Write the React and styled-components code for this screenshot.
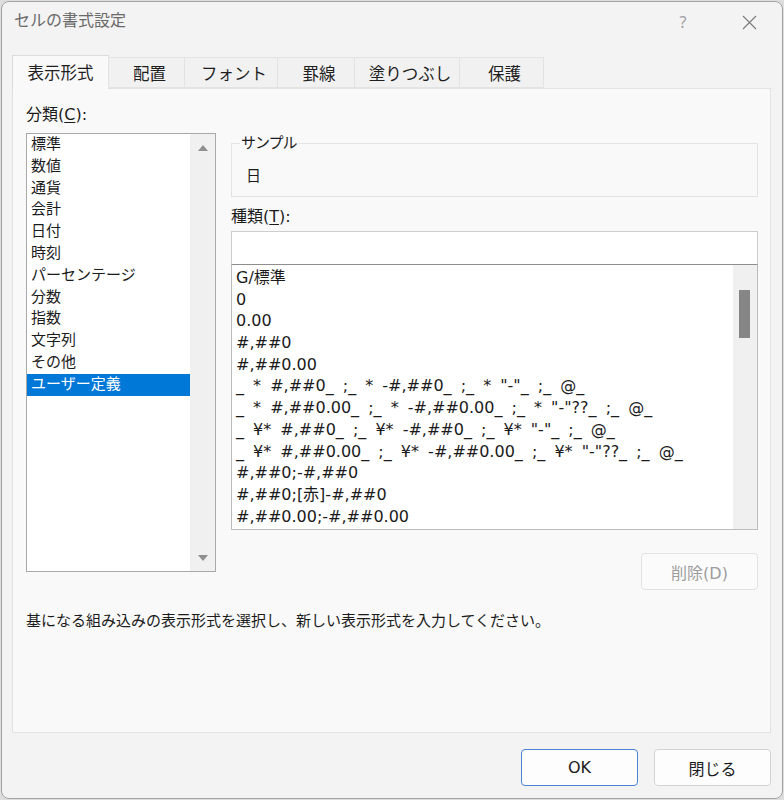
import React from 'react';
import styled, { createGlobalStyle } from 'styled-components';

const Global = createGlobalStyle`
  html, body { margin: 0; padding: 0; background: #dedede; }
  body {
    font-family: "DejaVu Sans", "Noto Sans CJK JP", sans-serif;
    font-size: 15px;
    color: #1b1b1b;
  }
  #root { width: 784px; height: 800px; }
`;

const Window = styled.div`
  margin: 1px 1px 0 1px;
  width: 782px;
  height: 798px;
  box-sizing: border-box;
  border: 1px solid #a3a3a3;
  border-radius: 8px;
  background: #f3f3f3;
  display: flex;
  flex-direction: column;
  overflow: hidden;
`;

const TitleBar = styled.div`
  height: 53px;
  box-sizing: border-box;
  padding: 9px 17px 0 12px;
  display: flex;
  align-items: flex-start;
  flex-shrink: 0;
`;

const Title = styled.div`
  line-height: 20px;
  font-size: 16px;
  color: #6a6a6a;
  flex: 1;
`;

const TitleButtons = styled.div`
  display: flex;
  gap: 34px;
`;

const TitleButton = styled.div`
  width: 32px;
  height: 22px;
  display: flex;
  align-items: center;
  justify-content: center;
  color: #a0a0a0;
  font-family: "Noto Sans", sans-serif;
  font-size: 16px;
  line-height: 20px;
`;

const Body = styled.div`
  padding: 0 11px 0 10px;
  display: flex;
  flex-direction: column;
`;

const TabStrip = styled.div`
  display: flex;
  align-items: flex-end;
  height: 33px;
  position: relative;
  z-index: 1;
`;

const Tab = styled.div`
  width: ${p => p.$w}px;
  height: ${p => (p.$active ? 34 : 31)}px;
  box-sizing: border-box;
  margin-left: ${p => (p.$first ? 0 : -1)}px;
  margin-bottom: ${p => (p.$active ? -1 : 0)}px;
  border: 1px solid ${p => (p.$active ? '#dcdcdc' : '#e3e3e3')};
  border-bottom: ${p => (p.$active ? 'none' : '1px solid #e3e3e3')};
  background: ${p => (p.$active ? '#f9f9f9' : '#f1f1f1')};
  display: flex;
  align-items: center;
  justify-content: center;
  padding-left: ${p => (p.$active ? 0 : 6)}px;
  padding-bottom: ${p => (p.$active ? 1 : 0)}px;
  font-size: 16.5px;
  color: #1f1f1f;
`;

const Panel = styled.div`
  height: 645px;
  box-sizing: border-box;
  border: 1px solid #e2e2e2;
  background: #f9f9f9;
  padding: 16px 12px 0 13px;
  display: flex;
  flex-direction: column;
`;

const Columns = styled.div`
  display: flex;
  align-items: flex-start;
  gap: 15px;
`;

const LeftColumn = styled.div`
  width: 190px;
  display: flex;
  flex-direction: column;
  gap: 8px;
`;

const RightColumn = styled.div`
  width: 527px;
  padding-top: 28px;
  display: flex;
  flex-direction: column;
`;

const Label = styled.div`
  line-height: 20px;
  font-size: 16px;
  color: #1b1b1b;
  margin-top: ${p => p.$mt || 0}px;
  u { text-underline-offset: 2px; }
`;

const ListBox = styled.div`
  height: ${p => p.$h}px;
  box-sizing: border-box;
  border: 1px solid ${p => p.$border};
  border-top: ${p => (p.$noTop ? 'none' : `1px solid ${p.$border}`)};
  background: #ffffff;
  display: flex;
  overflow: hidden;
`;

const Items = styled.div`
  flex: 1;
  padding-top: ${p => p.$pt || 0}px;
  min-width: 0;
  overflow: hidden;
`;

const Item = styled.div`
  height: ${p => p.$lh}px;
  line-height: ${p => p.$lh}px;
  padding-left: 4px;
  white-space: pre;
  font-size: ${p => p.$fs || 15}px;
  word-spacing: ${p => p.$ws || 0}px;
  background: ${p => (p.$selected ? '#0078d7' : 'transparent')};
  color: ${p => (p.$selected ? '#ffffff' : '#1b1b1b')};
`;

const ArrowTrack = styled.div`
  width: 25px;
  background: #f0f0f0;
  display: flex;
  flex-direction: column;
  align-items: center;
  justify-content: space-between;
  padding: 11px 0 10px;
  box-sizing: border-box;
`;

const Arrow = styled.div`
  width: 0;
  height: 0;
  border-left: 5.5px solid transparent;
  border-right: 5.5px solid transparent;
  ${p =>
    p.$up
      ? 'border-bottom: 6px solid #8f8f8f;'
      : 'border-top: 6px solid #8f8f8f;'}
`;

const ThumbTrack = styled.div`
  width: 24px;
  background: #f0f0f0;
  padding: 25px 0 0 6px;
  box-sizing: border-box;
`;

const Thumb = styled.div`
  width: 11px;
  height: 48px;
  background: #868686;
`;

const GroupBox = styled.fieldset`
  margin: 0;
  padding: 0 0 0 8px;
  border: 1px solid #e3e3e3;
  min-width: 0;
`;

const Legend = styled.legend`
  padding: 0 1px;
  line-height: 20px;
  font-size: 15px;
  letter-spacing: -1px;
  color: #1b1b1b;
`;

const SampleValue = styled.div`
  margin: 13px 0 10px 6px;
  line-height: 20px;
  font-size: 15px;
  color: #1b1b1b;
`;

const TextInput = styled.div`
  margin-top: 4px;
  height: 34px;
  box-sizing: border-box;
  background: #ffffff;
  border: 1px solid #cdcdcd;
  border-bottom: 1px solid #8e8e8e;
`;

const Button = styled.div`
  width: 117px;
  height: 37px;
  box-sizing: border-box;
  border-radius: 4px;
  border: 1px solid ${p => p.$border || '#d3d3d3'};
  background: ${p => (p.$disabled ? '#fbfbfb' : '#fdfdfd')};
  color: ${p => (p.$disabled ? '#9d9d9d' : '#1b1b1b')};
  display: flex;
  align-items: center;
  justify-content: center;
  font-size: 16px;
  align-self: ${p => (p.$end ? 'flex-end' : 'auto')};
  margin-top: ${p => p.$mt || 0}px;
`;

const Description = styled.div`
  margin-top: 21px;
  line-height: 20px;
  font-size: 15px;
  color: #1b1b1b;
`;

const Footer = styled.div`
  display: flex;
  justify-content: flex-end;
  gap: 16px;
  padding-top: 16px;
`;

const tabs = [
  { label: '表示形式', w: 97, active: true },
  { label: '配置', w: 77 },
  { label: 'フォント', w: 94 },
  { label: '罫線', w: 78 },
  { label: '塗りつぶし', w: 106 },
  { label: '保護', w: 85 },
];

const categories = [
  '標準', '数値', '通貨', '会計', '日付', '時刻', 'パーセンテージ',
  '分数', '指数', '文字列', 'その他', 'ユーザー定義',
];

const formats = [
  'G/標準',
  '0',
  '0.00',
  '#,##0',
  '#,##0.00',
  '_ * #,##0_ ;_ * -#,##0_ ;_ * "-"_ ;_ @_ ',
  '_ * #,##0.00_ ;_ * -#,##0.00_ ;_ * "-"??_ ;_ @_ ',
  '_ ¥* #,##0_ ;_ ¥* -#,##0_ ;_ ¥* "-"_ ;_ @_ ',
  '_ ¥* #,##0.00_ ;_ ¥* -#,##0.00_ ;_ ¥* "-"??_ ;_ @_ ',
  '#,##0;-#,##0',
  '#,##0;[赤]-#,##0',
  '#,##0.00;-#,##0.00',
];

export default function App() {
  return (
    <>
      <Global />
      <Window>
        <TitleBar>
          <Title>セルの書式設定</Title>
          <TitleButtons>
            <TitleButton>?</TitleButton>
            <TitleButton>
              <svg width="15" height="15" viewBox="0 0 15 15">
                <path d="M1 1 L14 14 M14 1 L1 14" stroke="#7a7a7a" strokeWidth="1.1" fill="none" />
              </svg>
            </TitleButton>
          </TitleButtons>
        </TitleBar>
        <Body>
          <TabStrip>
            {tabs.map((t, i) => (
              <Tab key={t.label} $w={t.w} $active={t.active} $first={i === 0}>
                {t.label}
              </Tab>
            ))}
          </TabStrip>
          <Panel>
            <Columns>
              <LeftColumn>
                <Label>
                  分類(<u>C</u>):
                </Label>
                <ListBox $h={439} $border="#a9a9a9">
                  <Items>
                    {categories.map((c, i) => (
                      <Item key={c} $lh={21.8} $selected={i === categories.length - 1}>
                        {c}
                      </Item>
                    ))}
                  </Items>
                  <ArrowTrack>
                    <Arrow $up />
                    <Arrow />
                  </ArrowTrack>
                </ListBox>
              </LeftColumn>
              <RightColumn>
                <GroupBox>
                  <Legend>サンプル</Legend>
                  <SampleValue>日</SampleValue>
                </GroupBox>
                <Label $mt={10}>
                  種類(<u>T</u>):
                </Label>
                <TextInput />
                <ListBox $h={265} $border="#bcbcbc" $noTop>
                  <Items $pt={2}>
                    {formats.map(f => (
                      <Item key={f} $lh={21.7} $fs={16} $ws={4}>
                        {f}
                      </Item>
                    ))}
                  </Items>
                  <ThumbTrack>
                    <Thumb />
                  </ThumbTrack>
                </ListBox>
                <Button $disabled $end $mt={23} $border="#e2e2e2">
                  削除(D)
                </Button>
              </RightColumn>
            </Columns>
            <Description>
              基になる組み込みの表示形式を選択し、新しい表示形式を入力してください。
            </Description>
          </Panel>
          <Footer>
            <Button $border="#4a82d4">OK</Button>
            <Button>閉じる</Button>
          </Footer>
        </Body>
      </Window>
    </>
  );
}
